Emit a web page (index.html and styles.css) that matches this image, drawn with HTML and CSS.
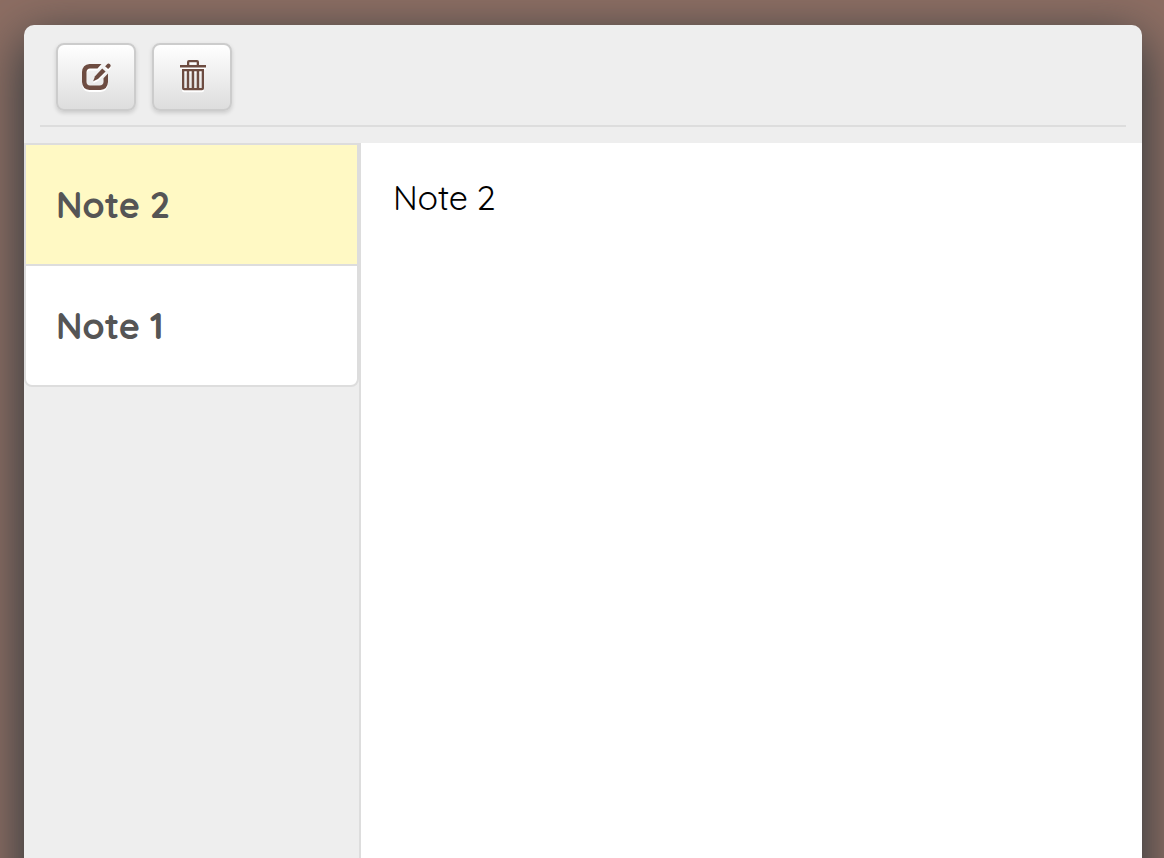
FILE: index.html
```html
<!DOCTYPE html>
<html lang="en">
<head>
<meta charset="utf-8">
<title>Notes</title>
<link rel="stylesheet" href="styles.css">
</head>
<body>
<main class="app">
  <header class="toolbar">
    <div class="toolbar-actions">
      <button class="button" aria-label="New note">
        <svg class="icon" width="36" height="36" viewBox="0 0 36 36">
          <path d="M23.500 8L19.500 12.500H12Q8.800 12.700 8.500 16V26Q8.700 29.300 12 29.500H21.500Q25.300 29.400 25.500 26V22.300L30 17.500V26Q29.500 33.500 22.500 34H11.500Q4.500 33.500 4 26V16Q4.500 8.500 11.500 8Z"/>
          <path d="M24.200 12.500L27.600 15.600L20 23L15.200 25.300L17 20.200Z"/>
          <path d="M28.200 9.200Q30 6.300 32 8.200Q33.700 9.900 31.200 11.900L30.100 13L27.100 10.300Z"/>
        </svg>
      </button>
      <button class="button" aria-label="Delete note">
        <svg class="icon" width="36" height="36" viewBox="0 0 36 36">
          <path fill-rule="evenodd" d="M13 9V6Q13 4 15 4H23Q25 4 25 6V9H32V11.500H6V9ZM15.300 9H22.700V6.300H15.300Z"/>
          <path fill-rule="evenodd" d="M8 13H30V32.300Q30 34.300 28 34.300H10Q8 34.300 8 32.300ZM10.300 15.300V32H12.800V15.300ZM15.200 15.300V32H17.700V15.300ZM20.200 15.300V32H22.700V15.300ZM25.200 15.300V32H27.700V15.300Z"/>
        </svg>
      </button>
    </div>
  </header>
  <div class="workspace">
    <aside class="sidebar">
      <ul class="note-list">
        <li class="note is-active">Note 2</li>
        <li class="note">Note 1</li>
      </ul>
    </aside>
    <section class="editor">Note 2</section>
  </div>
</main>
</body>
</html>
```
FILE: styles.css
```css
* { box-sizing: border-box; }
html { height: 100%; background: #8d6e63; }
body {
  height: 100vh;
  margin: 0;
  padding: 25px 22px 0 24px;
  overflow: hidden;
  font-family: Quicksand, Lato, sans-serif;
}
.app {
  display: flex;
  flex-direction: column;
  height: 960px;
  border-radius: 10px;
  background: #eee;
  box-shadow: 0 14px 52px #263238;
}
.toolbar { height: 118px; padding: 0 16px; }
.toolbar-actions {
  display: flex;
  gap: 16px;
  height: 102px;
  padding: 18px 16px 0;
  border-bottom: 2px solid #ddd;
}
.button {
  display: flex;
  justify-content: center;
  align-items: center;
  width: 80px;
  height: 68px;
  padding: 0 0 6px;
  border: 2px solid #ccc;
  border-radius: 8px;
  background: linear-gradient(#fff, #ddd);
  box-shadow: 0 2px 4px rgba(0, 0, 0, .15);
}
.icon { fill: #6d4c41; filter: drop-shadow(0 2px 0 #fff); }
.workspace { display: flex; flex: 1; }
.sidebar { width: 337px; border-right: 2px solid #ddd; }
.note-list {
  margin: 0;
  padding: 0;
  list-style: none;
  border: 2px solid #ddd;
  border-radius: 0 0 8px 8px;
  background: #fff;
  overflow: hidden;
}
.note {
  display: flex;
  align-items: center;
  height: 119px;
  padding: 0 30px 1px;
  color: #555;
  font-size: 36px;
  font-weight: 700;
  letter-spacing: -.2px;
}
.is-active { height: 121px; border-bottom: 2px solid #ddd; background: #fff9c4; }
.editor {
  flex: 1;
  padding: 34px 32px;
  background: #fff;
  color: #000;
  font-size: 34px;
  font-weight: 400;
  line-height: 42px;
  letter-spacing: -.3px;
}
```
